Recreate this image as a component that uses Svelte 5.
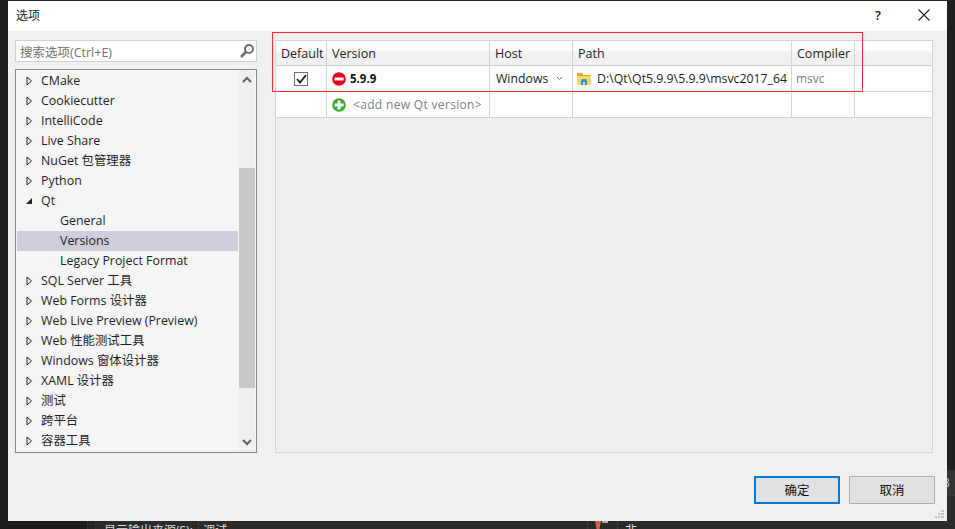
<script lang="ts">
	type TreeItem = {
		label: string;
		arrow?: 'closed' | 'open';
		child?: boolean;
		selected?: boolean;
	};

	const items: TreeItem[] = [
		{ label: 'CMake', arrow: 'closed' },
		{ label: 'Cookiecutter', arrow: 'closed' },
		{ label: 'IntelliCode', arrow: 'closed' },
		{ label: 'Live Share', arrow: 'closed' },
		{ label: 'NuGet 包管理器', arrow: 'closed' },
		{ label: 'Python', arrow: 'closed' },
		{ label: 'Qt', arrow: 'open' },
		{ label: 'General', child: true },
		{ label: 'Versions', child: true, selected: true },
		{ label: 'Legacy Project Format', child: true },
		{ label: 'SQL Server 工具', arrow: 'closed' },
		{ label: 'Web Forms 设计器', arrow: 'closed' },
		{ label: 'Web Live Preview (Preview)', arrow: 'closed' },
		{ label: 'Web 性能测试工具', arrow: 'closed' },
		{ label: 'Windows 窗体设计器', arrow: 'closed' },
		{ label: 'XAML 设计器', arrow: 'closed' },
		{ label: '测试', arrow: 'closed' },
		{ label: '跨平台', arrow: 'closed' },
		{ label: '容器工具', arrow: 'closed' }
	];
</script>

<div class="desktop">
	<div class="upper">
		<div class="dialog">
			<header class="titlebar">
				<span class="title">选项</span>
				<span class="help">?</span>
				<svg class="close" width="16" height="16" viewBox="0 0 16 16">
					<path d="M2.5 2.5 L13.5 13.5 M13.5 2.5 L2.5 13.5" stroke="#222" stroke-width="1.1" fill="none" />
				</svg>
			</header>

			<div class="body">
				<div class="main">
					<aside class="left">
						<div class="search">
							<span>搜索选项(Ctrl+E)</span>
							<svg width="16" height="16" viewBox="0 0 16 16">
								<circle cx="10" cy="6" r="4" fill="none" stroke="#6d6d6d" stroke-width="2" />
								<path d="M7 9 L2 14" stroke="#6d6d6d" stroke-width="2.6" />
							</svg>
						</div>
						<div class="tree">
							<ul class="rows">
								{#each items as item}
									<li class="row" class:selected={item.selected} class:child={item.child}>
										{#if item.arrow === 'closed'}
											<svg class="arrow" width="7" height="10" viewBox="0 0 7 10">
												<path d="M1 1 L5.5 5 L1 9 Z" fill="#f5f5f5" stroke="#222" stroke-width="1" />
											</svg>
										{:else if item.arrow === 'open'}
											<svg class="arrow" width="7" height="10" viewBox="0 0 7 10">
												<path d="M6 2 L6 8 L0 8 Z" fill="#222" />
											</svg>
										{/if}
										<span>{item.label}</span>
									</li>
								{/each}
							</ul>
							<div class="scrollbar">
								<svg width="16" height="16" viewBox="0 0 16 16">
									<path d="M4 10 L8 6 L12 10" fill="none" stroke="#606060" stroke-width="2" />
								</svg>
								<div class="track"><div class="thumb"></div></div>
								<svg width="16" height="16" viewBox="0 0 16 16">
									<path d="M4 6 L8 10 L12 6" fill="none" stroke="#606060" stroke-width="2" />
								</svg>
							</div>
						</div>
					</aside>

					<section class="table">
						<div class="redbox"></div>
						<div class="tr head">
							<div class="td c0">Default</div>
							<div class="td c1">Version</div>
							<div class="td c2">Host</div>
							<div class="td c3">Path</div>
							<div class="td c4">Compiler</div>
							<div class="td c5"></div>
						</div>
						<div class="tr">
							<div class="td c0 center">
								<span class="check">
									<svg width="11" height="10" viewBox="0 0 11 10">
										<path d="M1 5 L4 8.5 L10 1" fill="none" stroke="#222" stroke-width="1.8" />
									</svg>
								</span>
							</div>
							<div class="td c1">
								<svg class="status" width="14" height="14" viewBox="0 0 14 14">
									<circle cx="7" cy="7" r="6.8" fill="#e8001c" />
									<rect x="2.5" y="5.5" width="9" height="3" fill="#fff" />
								</svg>
								<b>5.9.9</b>
							</div>
							<div class="td c2 host">
								<span>Windows</span>
								<svg width="7" height="5" viewBox="0 0 7 5">
									<path d="M1 1 L3.5 3.5 L6 1" fill="none" stroke="#666" stroke-width="1" />
								</svg>
							</div>
							<div class="td c3">
								<svg class="folder" width="14" height="14" viewBox="0 0 14 14">
									<path d="M0 1 H5 L6.5 3 H14 V13 H0 Z" fill="#fcd667" />
									<path d="M0 1 H5 L6.5 3 H14 V4 H0 Z" fill="#e2a52a" />
									<path d="M4 13 V9 Q4 7 6 7 H8 Q10 7 10 9 V13 H8 V10 H6 V13 Z" fill="#2a8fd6" />
								</svg>
								<span class="path">D:\Qt\Qt5.9.9\5.9.9\msvc2017_64</span>
							</div>
							<div class="td c4 muted compiler">msvc</div>
							<div class="td c5"></div>
						</div>
						<div class="tr">
							<div class="td c0"></div>
							<div class="td c1">
								<svg class="status" width="14" height="14" viewBox="0 0 14 14">
									<circle cx="7" cy="7" r="6.8" fill="#3aaa2e" />
									<path d="M7 2.5 V11.5 M2.5 7 H11.5" stroke="#fff" stroke-width="3" />
								</svg>
								<span class="muted add">&lt;add new Qt version&gt;</span>
							</div>
							<div class="td c2"></div>
							<div class="td c3"></div>
							<div class="td c4"></div>
							<div class="td c5"></div>
						</div>
					</section>
				</div>

				<footer class="buttons">
					<button class="btn primary">确定</button>
					<button class="btn">取消</button>
				</footer>
				<svg class="grip" width="9" height="9" viewBox="0 0 9 9">
					<path d="M6 0h3v2H6zM3 3h2v2H3zM6 3h3v2H6zM0 6h2v2H0zM3 6h2v2H3zM6 6h3v2H6z" fill="#c4c4c4" />
				</svg>
			</div>
		</div>
		<div class="side">
			<div class="side-tab">3</div>
			<div class="side-dots"></div>
		</div>
	</div>
	<div class="strip">
		<div class="seg seg-a"></div>
		<div class="seg seg-b"></div>
		<div class="seg seg-c">显示输出来源(S):</div>
		<div class="seg seg-d">调试</div>
		<div class="seg seg-f">
			<svg width="16" height="8" viewBox="0 0 16 8">
				<path d="M0 0 H6 L4.5 8 H1.5 Z" fill="#d9604a" />
				<rect x="7" y="0" width="6" height="2" fill="#aaa" />
			</svg>
		</div>
		<div class="seg seg-g">非</div>
	</div>
</div>

<style>
	:global(body) {
		margin: 0;
		background: #1f1f1f;
		overflow: hidden;
	}
	.desktop {
		width: 955px;
		height: 529px;
		overflow: hidden;
		box-sizing: border-box;
		background: #1f1f1f;
		font-family: 'Open Sans', 'Noto Sans CJK SC', sans-serif;
		font-size: 12.3px;
		color: #1e1e1e;
	}
	.upper {
		display: flex;
		height: 521px;
		padding: 1px 0 0 8px;
		box-sizing: border-box;
	}
	.dialog {
		width: 939px;
		height: 520px;
		background: #f0f0f0;
		display: flex;
		flex-direction: column;
	}
	.titlebar {
		height: 30px;
		flex-shrink: 0;
		background: #fff;
		display: flex;
		align-items: center;
		padding: 0 15px 2px 8px;
		box-sizing: border-box;
	}
	.title {
		flex: 1;
		font-size: 12px;
	}
	.help {
		font-size: 13px;
		font-weight: 600;
		margin-right: 35px;
	}
	.body {
		flex: 1;
		position: relative;
		display: flex;
		flex-direction: column;
		padding: 9px 14px 0 7px;
	}
	.main {
		display: flex;
		gap: 18px;
		height: 413px;
	}
	.left {
		width: 242px;
		flex-shrink: 0;
		display: flex;
		flex-direction: column;
		gap: 7px;
	}
	.search {
		height: 22px;
		box-sizing: border-box;
		background: #fff;
		border: 1px solid #ccceDB;
		display: flex;
		align-items: center;
		justify-content: space-between;
		padding: 0 1px 0 4px;
		color: #717171;
		font-size: 12.5px;
	}
	.tree {
		flex: 1;
		min-height: 0;
		box-sizing: border-box;
		border: 1px solid #828790;
		background: #f5f5f5;
		display: flex;
		padding: 1px 1px 0 1px;
		overflow: hidden;
		font-size: 12.4px;
	}
	.rows {
		list-style: none;
		margin: 0;
		padding: 0;
		flex: 1;
		min-width: 0;
	}
	.row {
		height: 20px;
		line-height: 18px;
		display: flex;
		align-items: center;
		padding-left: 9px;
		white-space: nowrap;
	}
	.row span {
		display: block;
		height: 18px;
		margin-top: -1px;
	}
	.row.child {
		padding-left: 43px;
	}
	.row.selected {
		background: #cccedb;
	}
	.arrow {
		flex-shrink: 0;
		margin-right: 8px;
	}
	.scrollbar {
		width: 16px;
		margin: -1px 0 0 1px;
		flex-shrink: 0;
		background: #efefef;
		display: flex;
		flex-direction: column;
		align-items: center;
		padding: 2px 0;
	}
	.track {
		flex: 1;
		width: 100%;
		padding-top: 80px;
		padding-bottom: 46px;
		box-sizing: border-box;
		display: flex;
	}
	.thumb {
		width: 100%;
		background: #c8c8c8;
	}
	.table {
		flex: 1;
		position: relative;
		box-sizing: border-box;
		border: 1px solid #d4d4d4;
		background: #efefef;
	}
	.redbox {
		position: absolute;
		left: -4px;
		top: -9px;
		width: 589px;
		height: 58px;
		border: 1px solid #ee2c2c;
		pointer-events: none;
	}
	.tr {
		display: flex;
		height: 26px;
		box-sizing: border-box;
		background: #fff;
		border-bottom: 1px solid #d4d4d4;
	}
	.head {
		height: 25px;
		background: linear-gradient(#fff 0, #fff 35%, #f1f1f1 50%, #f0f0f0 100%);
		border-bottom-color: #d0d0d0;
		font-size: 12.5px;
	}
	.td {
		box-sizing: border-box;
		border-right: 1px solid #d4d4d4;
		display: flex;
		align-items: center;
		padding-left: 5px;
		white-space: nowrap;
		overflow: hidden;
	}
	.c0 { width: 51px; }
	.c1 { width: 163px; }
	.c2 { width: 83px; }
	.c3 { width: 219px; }
	.c4 { width: 63px; }
	.c5 { flex: 1; border-right: 0; }
	.center {
		justify-content: center;
		padding-left: 0;
	}
	.check {
		width: 14px;
		height: 14px;
		box-sizing: border-box;
		border: 1px solid #707070;
		display: flex;
		align-items: center;
		justify-content: center;
	}
	.status {
		flex-shrink: 0;
		margin-right: 4px;
	}
	b {
		font-weight: 700;
		font-size: 11.5px;
		color: #111;
	}
	.host {
		justify-content: space-between;
		padding-left: 6px;
		padding-right: 9px;
	}
	.folder {
		flex-shrink: 0;
		margin-right: 6px;
		margin-left: -1px;
	}
	.muted {
		color: #808080;
	}
	.compiler {
		padding-left: 4px;
		font-size: 12px;
	}
	.add {
		margin-left: 3px;
		font-size: 12px;
		letter-spacing: 0.33px;
	}
	.buttons {
		display: flex;
		justify-content: flex-end;
		gap: 9px;
		margin: 23px -2px 0 0;
	}
	.btn {
		width: 86px;
		height: 28px;
		box-sizing: border-box;
		background: #e1e1e1;
		border: 1px solid #adadad;
		font: inherit;
		font-size: 12.5px;
		color: #111;
		padding: 0 0 2px;
	}
	.primary {
		border: 2px solid #0078d7;
	}
	.grip {
		position: absolute;
		right: 3px;
		bottom: 2px;
	}
	.side {
		flex: 1;
		min-width: 0;
		padding-top: 469px;
		overflow: hidden;
	}
	.side-tab {
		height: 25px;
		background: #333337;
		color: #ccc;
		font-size: 12px;
		line-height: 25px;
		text-indent: -4px;
	}
	.side-dots {
		height: 26px;
		background: #2a2a2a;
		border-top: 1px solid #3a3a3a;
		box-sizing: border-box;
	}
	.strip {
		height: 8px;
		display: flex;
		overflow: hidden;
		font-size: 12px;
		color: #ddd;
		line-height: 14px;
		white-space: nowrap;
	}
	.seg {
		box-sizing: border-box;
		height: 100%;
		padding-top: 3px;
	}
	.seg-a { width: 88px; background: #1c1c1c; border-right: 1px solid #333; }
	.seg-b { width: 8px; background: #252526; border-right: 1px solid #333; }
	.seg-c { width: 103px; background: #2a2a2a; padding-left: 8px; border-right: 1px solid #3c3c3c; }
	.seg-d { width: 389px; background: #2a2a2a; padding-left: 4px; border-right: 1px solid #3c3c3c; }
	.seg-f { width: 30px; background: #2a2a2a; padding: 0 0 0 7px; border-right: 1px solid #3c3c3c; }
	.seg-f svg { display: block; }
	.seg-g { flex: 1; background: #2a2a2a; padding-left: 7px; }
</style>
